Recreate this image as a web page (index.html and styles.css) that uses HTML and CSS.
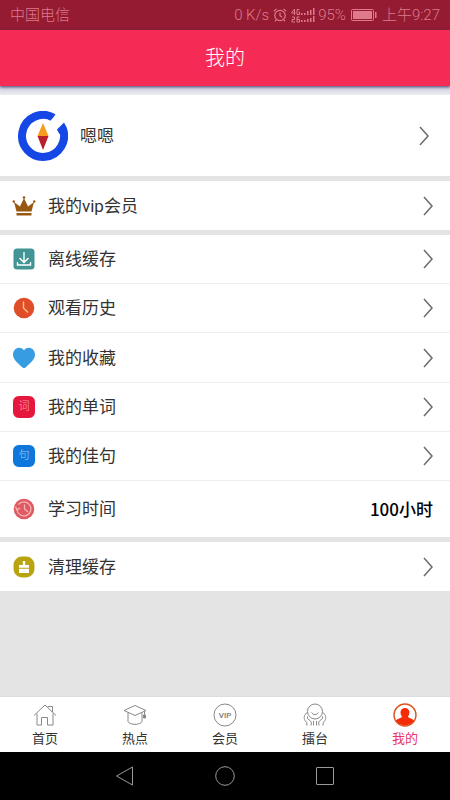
FILE: index.html
```
<!DOCTYPE html>
<html lang="zh-CN">
<head>
<meta charset="utf-8">
<meta name="viewport" content="width=device-width, initial-scale=1">
<title>我的</title>
<link rel="stylesheet" href="styles.css">
</head>
<body>
<div class="status">
  <span class="carrier">中国电信</span>
  <span>0 K/s</span>
  <svg class="alarm" width="14" height="14" viewBox="0 0 14 14" fill="none" stroke="currentColor" stroke-width="1.2"><circle cx="7" cy="7.5" r="5.2"/><path d="M7 4.5v3.2l2.2 1.5M.7 3.4 3.5.9M13.3 3.4 10.5.9M3.2 11.8 2 13.3M10.8 11.8l1.200 1.5"/></svg>
  <svg class="signal" width="25" height="15" viewBox="0 0 25 15"><g fill="none" stroke="currentColor" stroke-width="1"><path d="M3.500 7V1L.5 5h4M8.500 1.500h-2.500v5h2.500v-2.500h-1M1 9h2.500v2.500h-2.500v2.500h3M8.500 9h-2.500v5h2.500v-2.500h-2.500"/></g><g fill="currentColor"><path d="M10 5h1.500v2H10zM13 5h1.500v2H13zM16 3h1.500v4H16zM19 2h1.500v5H19zM22 0h1.500v7H22zM10 12h1.500v2H10zM13 12h1.500v2H13zM16 11h1.500v3H16zM19 10h1.500v4H19zM22 8h1.500v6H22z"/></g></svg>
  <span>95%</span>
  <svg class="battery" width="26" height="12" viewBox="0 0 26 12"><rect x=".5" y=".5" width="22" height="11" rx="1" fill="none" stroke="currentColor"/><path d="M2 2h19v8H2zM24 3h1.500v6H24z" fill="currentColor"/></svg>
  <time>上午9:27</time>
</div>
<header class="header"><h1>我的</h1></header>

<main class="content">
  <a class="row profile" href="#">
    <svg width="50" height="50" viewBox="0 0 50 50"><path d="M35.500 6.700A21 21 0 1 0 44.300 16.500" fill="none" stroke="#1547e6" stroke-width="8"/><path d="M30 12.500 41 0l9 8-11 13z" fill="#fff"/><path d="m39 18.500 7-7q2.500 3.500 3.300 8.500l-8 3z" fill="#1547e6"/><path d="m25 12 5.500 13h-11z" fill="#f79b1c"/><path d="M19.500 25h11L25 39z" fill="#b91e2b"/></svg>
    <span class="label">嗯嗯</span>
    <svg class="arrow" viewBox="0 0 10 20"><path d="m1 1 8 9-8 9"/></svg>
  </a>

  <a class="row" href="#">
    <svg class="icon" viewBox="0 0 24 24" fill="#985812"><path d="M4.500 17.500 2 8l6 4.500L12 4l4 8.500L22 8l-2.500 9.500zM4.500 19h15v2.500h-15z"/><circle cx="12" cy="3.500" r="1.300"/><circle cx="1.800" cy="7.500" r="1.200"/><circle cx="22.200" cy="7.500" r="1.200"/></svg>
    <span class="label">我的vip会员</span>
    <svg class="arrow" viewBox="0 0 10 20"><path d="m1 1 8 9-8 9"/></svg>
  </a>

  <div class="group">
    <a class="row" href="#">
      <svg class="icon" viewBox="0 0 24 24"><rect x="1.500" y="1.500" width="21" height="21" rx="3.500" fill="#429594"/><path d="M12 5v10M7.500 11l4.500 4.500 4.500-4.500M5.500 15v3h13v-3" fill="none" stroke="#fff" stroke-width="1.400"/></svg>
      <span class="label">离线缓存</span>
      <svg class="arrow" viewBox="0 0 10 20"><path d="m1 1 8 9-8 9"/></svg>
    </a>
    <a class="row" href="#">
      <svg class="icon" viewBox="0 0 24 24"><circle cx="12" cy="12" r="10.300" fill="#e04d29"/><path d="M11.500 5.500V12l4.500 4.500" fill="none" stroke="#f8c18e" stroke-width="1.400"/></svg>
      <span class="label">观看历史</span>
      <svg class="arrow" viewBox="0 0 10 20"><path d="m1 1 8 9-8 9"/></svg>
    </a>
    <a class="row" href="#">
      <svg class="icon" viewBox="0 0 24 24"><path d="M12 4.500C14-.2 23.200.7 23 9c-.1 5-6 9-9.500 12.500q-1.500 1.200-3 0C7 18 1.100 14 1 9 .8.700 10-.2 12 4.500z" fill="#389ce2"/></svg>
      <span class="label">我的收藏</span>
      <svg class="arrow" viewBox="0 0 10 20"><path d="m1 1 8 9-8 9"/></svg>
    </a>
    <a class="row" href="#">
      <span class="icon badge word">词</span>
      <span class="label">我的单词</span>
      <svg class="arrow" viewBox="0 0 10 20"><path d="m1 1 8 9-8 9"/></svg>
    </a>
    <a class="row" href="#">
      <span class="icon badge sentence">句</span>
      <span class="label">我的佳句</span>
      <svg class="arrow" viewBox="0 0 10 20"><path d="m1 1 8 9-8 9"/></svg>
    </a>
    <div class="row study">
      <svg class="icon" viewBox="0 0 24 24"><circle cx="12" cy="12" r="10.300" fill="#df5b64"/><path d="M5 13a7 7 0 1 0 1.500-5.500M3.500 9.500l1.500 3.500 3-2M12.500 7.500V12l3.500 3" fill="none" stroke="#f6b8ba" stroke-width="1.200"/></svg>
      <span class="label">学习时间</span>
      <strong class="value">100小时</strong>
    </div>
  </div>

  <a class="row" href="#">
    <svg class="icon" viewBox="0 0 24 24"><rect x="1.500" y="1.500" width="21" height="21" rx="8.500" fill="#b9a30f"/><path d="M10.800 6h2.400v4H17v2.800H7V10h3.800zM7 13.800h10V18H7z" fill="#fff"/></svg>
    <span class="label">清理缓存</span>
    <svg class="arrow" viewBox="0 0 10 20"><path d="m1 1 8 9-8 9"/></svg>
  </a>
</main>

<nav class="tabs">
  <a href="#"><svg viewBox="0 0 24 24"><path d="M1 12.500 12 2l11 10.500M4 10.500V22h4.500v-7.500h6V22H20V10.500M15 4.500V3.500h4.500V9"/></svg>首页</a>
  <a href="#"><svg viewBox="0 0 24 24"><path d="M1 7.500 12 2.500l11 5L12 12.500zM5 9.500v9c1.500 3.800 12.500 3.800 14 0v-9M21.500 8v7M20.500 12h2v3h-2z"/></svg>热点</a>
  <a href="#"><svg viewBox="0 0 24 24"><circle cx="12" cy="12" r="11"/><text x="12" y="15">VIP</text></svg>会员</a>
  <a href="#"><svg viewBox="0 0 24 24"><circle cx="12" cy="8.500" r="7.500"/><path d="M8.500 9.500q3.500 4.500 7 0M4.500 9C1 12 .500 15 2 17.500q2.500 1.500 2 5M19.500 9c3.500 3 4 6 2.500 8.500q-2.500 1.500-2 5M4.500 13.500v2l3 2.500q1.500 1 .5 4.500M19.500 13.500v2l-3 2.500q-1.500 1-.5 4.500M10.500 18v4.500M13.500 18v4.500"/></svg>擂台</a>
  <a class="active" href="#" aria-current="page"><svg viewBox="0 0 24 24"><circle cx="12" cy="12" r="11" stroke="#dc5520" stroke-width="1.400"/><path d="M12 5c5 0 5.500 5.500 3 8.500 0 1.500 4.500 2 6 4-4.500 6.500-13.500 6.500-18 0 1.500-2 6-2.500 6-4C6.500 10.500 7 5 12 5z" fill="#f52b06" stroke="none"/></svg>我的</a>
</nav>
<div class="system">
  <button aria-label="返回"><svg viewBox="0 0 20 20"><path d="M17.500 1v18L1.500 10z"/></svg></button>
  <button aria-label="主屏幕"><svg viewBox="0 0 20 20"><circle cx="10" cy="10" r="9.300"/></svg></button>
  <button aria-label="最近任务"><svg viewBox="0 0 20 20"><rect x="1.500" y="1.500" width="17" height="17" rx=".5"/></svg></button>
</div>
</body>
</html>
```
FILE: styles.css
```
* {
  box-sizing: border-box;
}

body {
  margin: 0;
  min-height: 100vh;
  display: flex;
  flex-direction: column;
  background: #e4e4e4;
  color: #333;
  font-family: Roboto, "Noto Sans CJK SC", sans-serif;
}

a {
  color: inherit;
  text-decoration: none;
}

.status {
  display: flex;
  align-items: center;
  height: 30px;
  padding: 0 10px;
  background: #941b31;
  color: #df7a8c;
  font-size: 15px;
  font-weight: 300;
  line-height: 20px;
  white-space: nowrap;
}

.carrier {
  margin-right: auto;
}

.alarm {
  margin: 0 4px;
}

.signal {
  margin-right: 2px;
}

.battery {
  margin: 0 5px;
}

.header {
  position: relative;
  display: flex;
  align-items: center;
  justify-content: center;
  height: 56px;
  background: #f62b55;
  color: #fff;
  box-shadow: 0 1px 3px #44386b;
}

.header h1 {
  margin: 0;
  font-size: 20px;
  font-weight: 300;
  line-height: 28px;
}

.content {
  flex: 1;
  display: flex;
  flex-direction: column;
  gap: 5px;
  padding-top: 9px;
  background: linear-gradient(#cfcfe2, #ececf0 9px, #e4e4e4 9px);
}

.row {
  display: flex;
  align-items: center;
  min-height: 49px;
  padding: 0 17px 0 12px;
  background: #fff;
  font-size: 17px;
  line-height: 24px;
}

.profile {
  min-height: 81px;
  padding: 0 21px 0 18px;
}

.group {
  display: flex;
  flex-direction: column;
  min-height: 302px;
  background: #fff;
}

.group .row {
  flex: 1;
  border-bottom: 1px solid #eee;
}

.group .study {
  flex: 0 0 56px;
  border-bottom: 0;
}

.icon {
  flex: none;
  width: 24px;
  height: 24px;
}

.label {
  flex: 1;
  margin-left: 12px;
}

.badge {
  border: 1px solid #fff;
  border-radius: 7px;
  color: #ffffffa0;
  font-size: 11px;
  font-weight: 300;
  line-height: 22px;
  text-align: center;
}

.word {
  background: #e6173d;
}

.sentence {
  background: #0e77dc;
}

.value {
  color: #000;
  font-family: "Noto Sans CJK SC", sans-serif;
  font-weight: 500;
}

.arrow {
  width: 10px;
  height: 20px;
  fill: none;
  stroke: #6b6b6b;
  stroke-width: 1.5;
}

.tabs {
  display: flex;
  height: 56px;
  background: #fff;
  border-top: 1px solid #ddd;
  font-size: 13px;
  line-height: 18px;
}

.tabs a {
  flex: 1;
  display: flex;
  flex-direction: column;
  align-items: center;
  gap: 3px;
  padding-top: 6px;
}

.tabs svg {
  width: 24px;
  height: 24px;
  fill: none;
  stroke: #888;
  stroke-width: 1;
}

.tabs text {
  fill: #777;
  stroke: none;
  font-size: 8px;
  font-weight: 500;
  text-anchor: middle;
}

.tabs .active {
  color: #e93564;
}

.system {
  display: flex;
  align-items: center;
  justify-content: center;
  gap: 80px;
  height: 48px;
  background: #000;
}

.system button {
  width: 20px;
  height: 20px;
  padding: 0;
  border: 0;
  background: none;
}

.system svg {
  display: block;
  fill: none;
  stroke: #999;
  stroke-width: 1;
}
```
